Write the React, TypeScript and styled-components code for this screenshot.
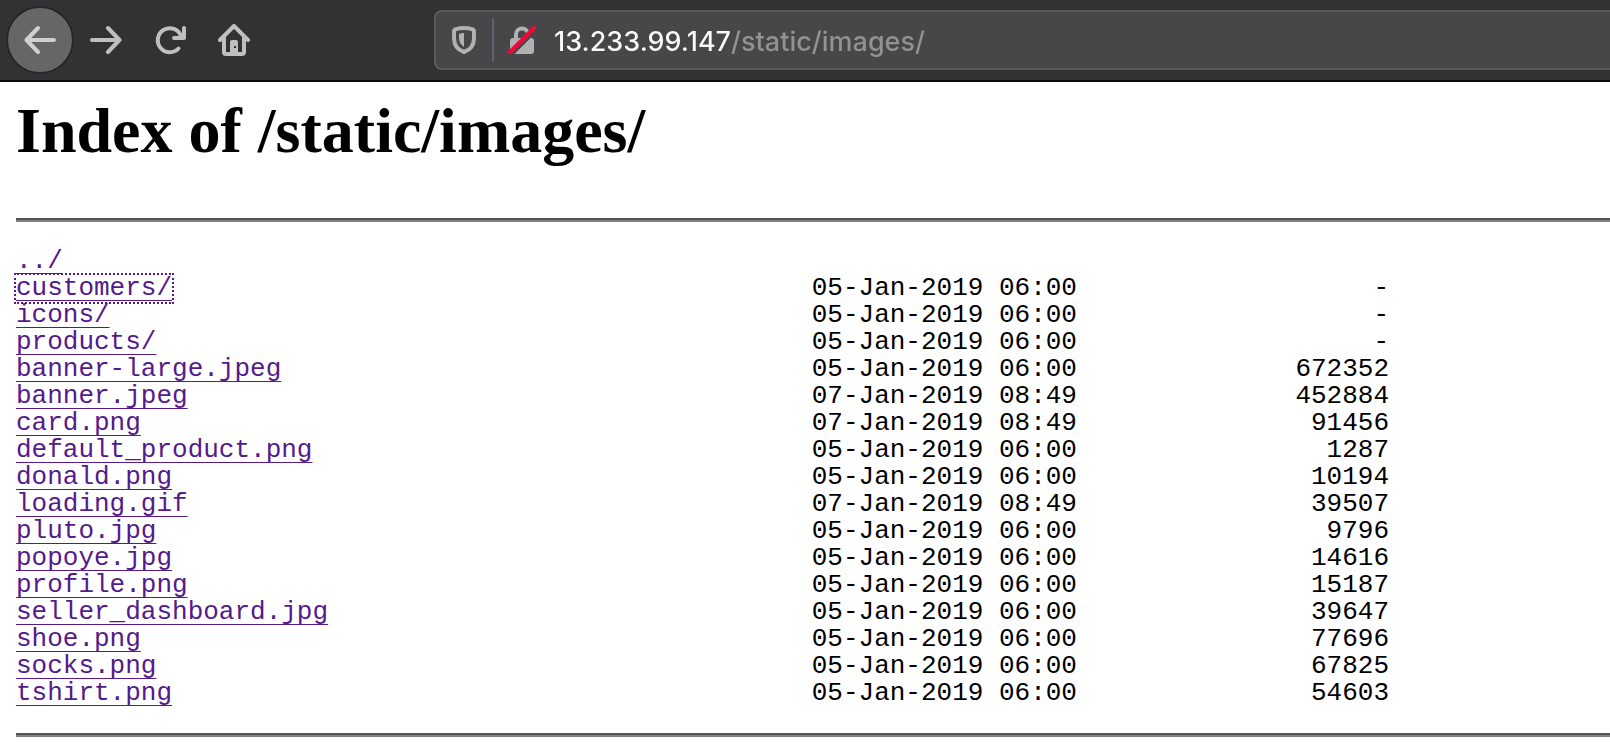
import React from "react";
import styled, { createGlobalStyle, css } from "styled-components";

const GlobalStyle = createGlobalStyle`
  *, *::before, *::after { box-sizing: border-box; }
  body { margin: 0; background: #fff; color: #000; overflow-x: hidden; }
`;

const Toolbar = styled.header`
  display: flex;
  align-items: center;
  height: 82px;
  padding-left: 6px;
  background: #323234;
  border-bottom: 2px solid #0c0c0d;
`;

const Nav = styled.nav`
  display: flex;
  align-items: center;
  flex: none;
`;

const NavButton = styled.button<{ $round?: boolean }>`
  display: flex;
  align-items: center;
  justify-content: center;
  width: 64px;
  height: 64px;
  padding: 0;
  border: 0;
  background: none;
  color: #bfbfc0;
  ${(p) =>
    p.$round &&
    css`
      width: 68px;
      height: 68px;
      border: 2px solid #272728;
      border-radius: 50%;
      background: #666667;
      color: #d0d0d1;
    `}
`;

const AddressBar = styled.div`
  display: flex;
  align-items: center;
  flex: 1;
  min-width: 0;
  height: 60px;
  margin-left: 168px;
  padding-left: 12px;
  border: 2px solid #5b5b5d;
  border-right: 0;
  border-radius: 8px 0 0 8px;
  background: #474749;
`;

const SiteButton = styled.button`
  display: flex;
  align-items: center;
  justify-content: center;
  width: 32px;
  height: 40px;
  padding: 0;
  border: 0;
  background: none;
  color: #b1b1b3;
`;

const Divider = styled.span`
  width: 2px;
  height: 42px;
  margin: 0 12px;
  background: #5f6475;
`;

const AddressInput = styled.input`
  flex: 1;
  min-width: 0;
  height: 46px;
  margin-left: 16px;
  padding: 2px 0 0;
  border: 0;
  outline: 0;
  font: 500 27px/44px Inter, "Liberation Sans", sans-serif;
  color: #fff;
  background: linear-gradient(90deg, #f9f9fa 177px, #929293 177px);
  -webkit-background-clip: text;
  background-clip: text;
  -webkit-text-fill-color: transparent;
`;

const Page = styled.main`
  padding: 12px 0 11px 16px;
`;

const Title = styled.h1`
  margin: 0 0 50px;
  font: bold 64px/74px "Liberation Serif", "Times New Roman", serif;
`;

const Rule = styled.hr`
  height: 4px;
  margin: 0;
  border: 0;
  border-top: 2px solid #555;
  background: #808080;
`;

const Listing = styled.table`
  margin: 26px 0;
  border-collapse: collapse;
  font: 26px/27px "Liberation Mono", "Courier New", monospace;
`;

const Cell = styled.td<{ $chars: number; $end?: boolean }>`
  width: ${(p) => p.$chars}ch;
  min-width: ${(p) => p.$chars}ch;
  height: 27px;
  padding: 0;
  white-space: pre;
  text-align: ${(p) => (p.$end ? "right" : "left")};
`;

const FileLink = styled.a<{ $focused?: boolean }>`
  display: block;
  width: fit-content;
  color: #551a8b;
  text-decoration: underline 1px;
  text-underline-offset: 5px;
  outline: ${(p) => (p.$focused ? "2px dotted #551a8b" : "none")};
`;

const stroke = {
  fill: "none",
  stroke: "currentColor",
  strokeWidth: 4,
  strokeLinecap: "round" as const,
  strokeLinejoin: "round" as const,
};

const BackIcon = () => (
  <svg width="32" height="32" viewBox="0 0 32 32" {...stroke}>
    <path d="M30 16H2.5M14 4 2.5 16 14 28" />
  </svg>
);

const ForwardIcon = () => (
  <svg width="32" height="32" viewBox="0 0 32 32" {...stroke}>
    <path d="M2 16h27.500M18 4l11.500 12L18 28" />
  </svg>
);

const ReloadIcon = () => (
  <svg width="32" height="32" viewBox="0 0 32 32" {...stroke}>
    <path d="M24.500 24.500A12 12 0 1 1 27 12" />
    <path d="M30 4v10H20" />
    <path d="M30 8v6h-6z" fill="currentColor" strokeWidth="1" />
  </svg>
);

const HomeIcon = () => (
  <svg width="32" height="32" viewBox="0 0 32 32" {...stroke}>
    <path d="M2 16 16 2l14 14" />
    <path d="M6 14v14q0 2 2 2h16q2 0 2-2V14" />
    <path
      d="M12 30V18q0-2 2-2h4q2 0 2 2v12zM16 22v2h2v-2z"
      fill="currentColor"
      fillRule="evenodd"
      stroke="none"
    />
  </svg>
);

const ShieldIcon = () => (
  <svg width="24" height="28" viewBox="0 0 24 28">
    <path
      d="M12 2C9 2 6 2.500 3.500 3.300Q2 3.800 2 5.500V12c0 7 4 12 10 14 6-2 10-7 10-14V5.500Q22 3.800 20.500 3.300C18 2.500 15 2 12 2z"
      fill="none"
      stroke="currentColor"
      strokeWidth="4"
    />
    <path d="M12 7v14c-3-2-5-5-5-9V8q2-1 5-1z" fill="currentColor" />
  </svg>
);

const InsecureIcon = () => (
  <svg width="30" height="30" viewBox="0 0 30 30">
    <path d="M9 14V9.500a6 6 0 0 1 12 0V14" fill="none" stroke="currentColor" strokeWidth="4" />
    <rect x="3" y="13" width="24" height="16" rx="3" fill="currentColor" />
    <path d="M4 30.500 30 4.500" stroke="#474749" strokeWidth="3" />
    <path d="M3 27 27 3" stroke="#ff0039" strokeWidth="4" strokeLinecap="round" />
  </svg>
);

const files: [string, string, string][] = [
  ["../", "", ""],
  ["customers/", "05-Jan-2019 06:00", "-"],
  ["icons/", "05-Jan-2019 06:00", "-"],
  ["products/", "05-Jan-2019 06:00", "-"],
  ["banner-large.jpeg", "05-Jan-2019 06:00", "672352"],
  ["banner.jpeg", "07-Jan-2019 08:49", "452884"],
  ["card.png", "07-Jan-2019 08:49", "91456"],
  ["default_product.png", "05-Jan-2019 06:00", "1287"],
  ["donald.png", "05-Jan-2019 06:00", "10194"],
  ["loading.gif", "07-Jan-2019 08:49", "39507"],
  ["pluto.jpg", "05-Jan-2019 06:00", "9796"],
  ["popoye.jpg", "05-Jan-2019 06:00", "14616"],
  ["profile.png", "05-Jan-2019 06:00", "15187"],
  ["seller_dashboard.jpg", "05-Jan-2019 06:00", "39647"],
  ["shoe.png", "05-Jan-2019 06:00", "77696"],
  ["socks.png", "05-Jan-2019 06:00", "67825"],
  ["tshirt.png", "05-Jan-2019 06:00", "54603"],
];

export default function App() {
  return (
    <>
      <GlobalStyle />
      <Toolbar>
        <Nav aria-label="Browser">
          <NavButton $round aria-label="Back"><BackIcon /></NavButton>
          <NavButton aria-label="Forward"><ForwardIcon /></NavButton>
          <NavButton aria-label="Reload"><ReloadIcon /></NavButton>
          <NavButton aria-label="Home"><HomeIcon /></NavButton>
        </Nav>
        <AddressBar>
          <SiteButton aria-label="Tracking protection"><ShieldIcon /></SiteButton>
          <Divider />
          <SiteButton aria-label="Connection is not secure"><InsecureIcon /></SiteButton>
          <AddressInput
            aria-label="Address"
            spellCheck={false}
            defaultValue="13.233.99.147/static/images/"
          />
        </AddressBar>
      </Toolbar>
      <Page>
        <Title>Index of /static/images/</Title>
        <Rule />
        <Listing aria-label="Directory listing">
          <tbody>
            {files.map(([name, date, size]) => (
              <tr key={name}>
                <Cell $chars={51}>
                  <FileLink href={name} $focused={name === "customers/"}>{name}</FileLink>
                </Cell>
                <Cell $chars={17}>{date}</Cell>
                <Cell $chars={20} $end>{size}</Cell>
              </tr>
            ))}
          </tbody>
        </Listing>
        <Rule />
      </Page>
    </>
  );
}
